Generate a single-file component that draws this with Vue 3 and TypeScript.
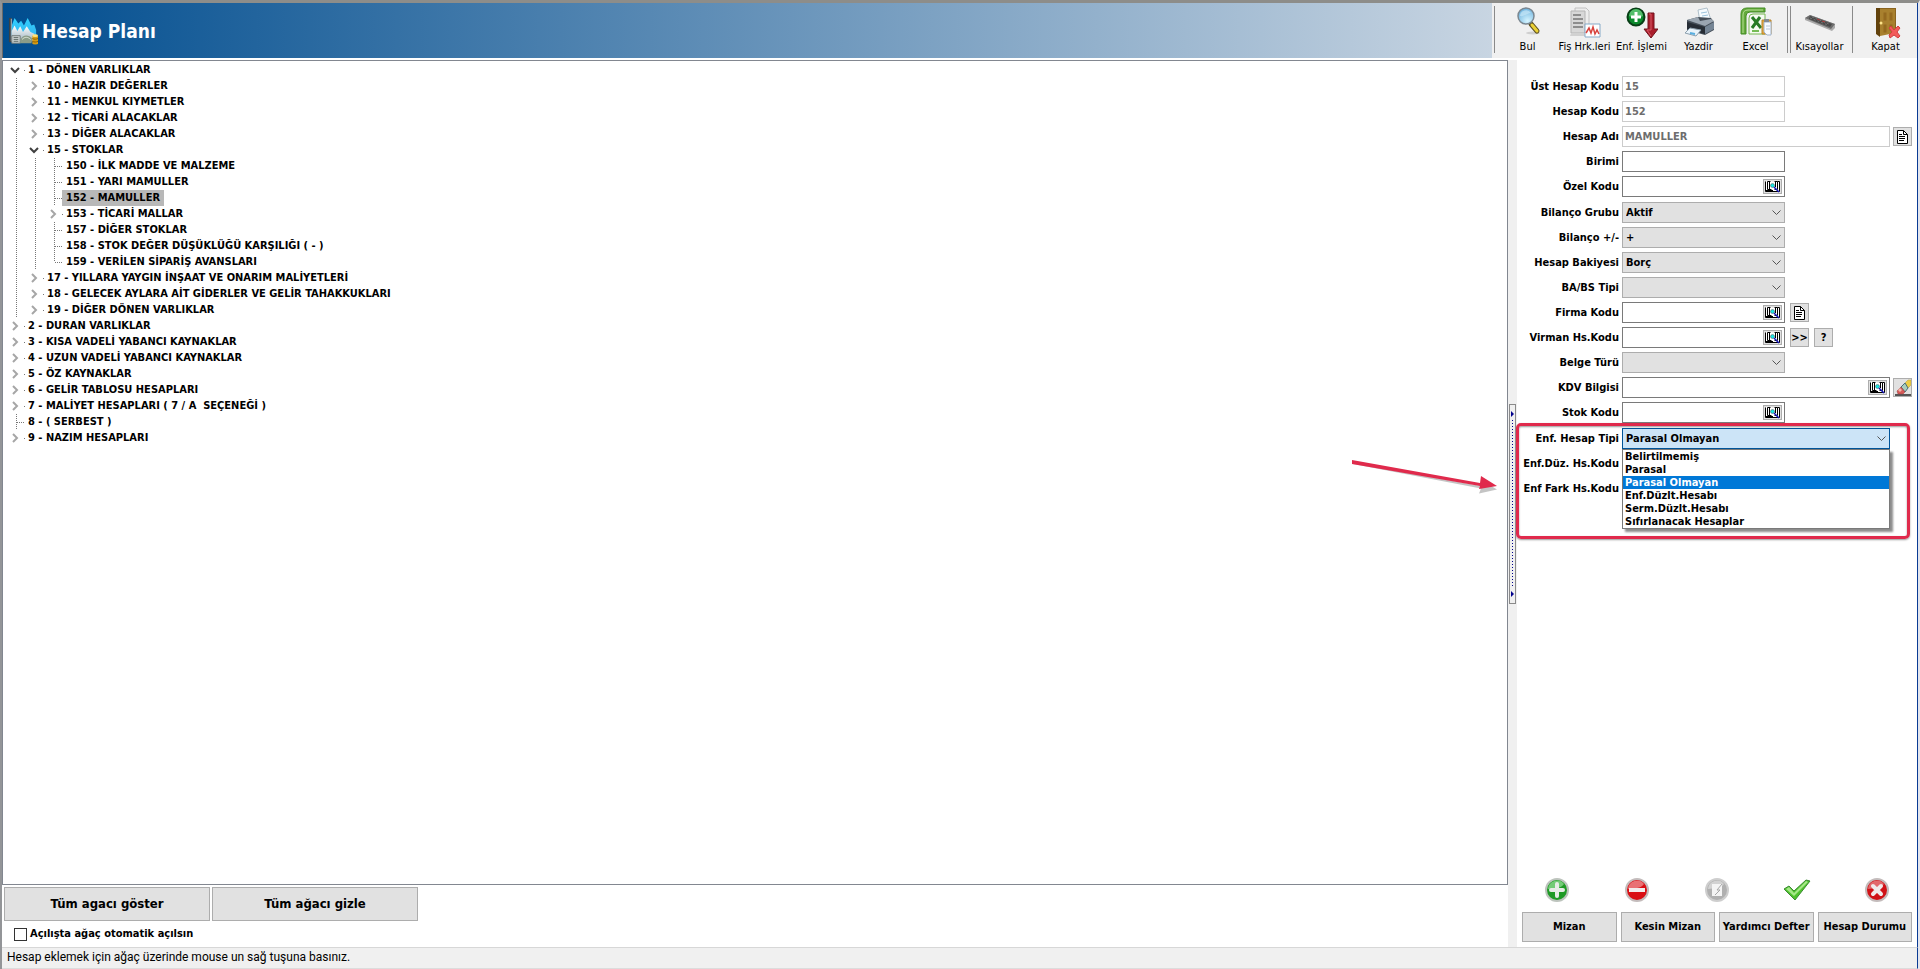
<script setup lang="ts">
import { computed, ref } from 'vue'

interface TreeNode {
  code: string
  name: string
  level: number
  branch: boolean
}

const nodes: TreeNode[] = [
  { code: '1', name: 'DÖNEN VARLIKLAR', level: 0, branch: true },
  { code: '10', name: 'HAZIR DEĞERLER', level: 1, branch: true },
  { code: '11', name: 'MENKUL KIYMETLER', level: 1, branch: true },
  { code: '12', name: 'TİCARİ ALACAKLAR', level: 1, branch: true },
  { code: '13', name: 'DİĞER ALACAKLAR', level: 1, branch: true },
  { code: '15', name: 'STOKLAR', level: 1, branch: true },
  { code: '150', name: 'İLK MADDE VE MALZEME', level: 2, branch: false },
  { code: '151', name: 'YARI MAMULLER', level: 2, branch: false },
  { code: '152', name: 'MAMULLER', level: 2, branch: false },
  { code: '153', name: 'TİCARİ MALLAR', level: 2, branch: true },
  { code: '157', name: 'DİĞER STOKLAR', level: 2, branch: false },
  { code: '158', name: 'STOK DEĞER DÜŞÜKLÜĞÜ KARŞILIĞI ( - )', level: 2, branch: false },
  { code: '159', name: 'VERİLEN SİPARİŞ AVANSLARI', level: 2, branch: false },
  { code: '17', name: 'YILLARA YAYGIN İNŞAAT VE ONARIM MALİYETLERİ', level: 1, branch: true },
  { code: '18', name: 'GELECEK AYLARA AİT GİDERLER VE GELİR TAHAKKUKLARI', level: 1, branch: true },
  { code: '19', name: 'DİĞER DÖNEN VARLIKLAR', level: 1, branch: true },
  { code: '2', name: 'DURAN VARLIKLAR', level: 0, branch: true },
  { code: '3', name: 'KISA VADELİ YABANCI KAYNAKLAR', level: 0, branch: true },
  { code: '4', name: 'UZUN VADELİ YABANCI KAYNAKLAR', level: 0, branch: true },
  { code: '5', name: 'ÖZ KAYNAKLAR', level: 0, branch: true },
  { code: '6', name: 'GELİR TABLOSU HESAPLARI', level: 0, branch: true },
  { code: '7', name: 'MALİYET HESAPLARI ( 7 / A  SEÇENEĞİ )', level: 0, branch: true },
  { code: '8', name: '( SERBEST )', level: 0, branch: false },
  { code: '9', name: 'NAZIM HESAPLARI', level: 0, branch: true },
]

const open = ref<string[]>(['1', '15'])
const selected = ref('152')
const autoOpen = ref(false)

const visible = computed(() =>
  nodes.filter((n) => {
    if (n.level === 0) return true
    if (!open.value.includes(n.code[0])) return false
    return n.level === 1 || open.value.includes(n.code.slice(0, 2))
  }),
)

function toggle(code: string) {
  open.value = open.value.includes(code) ? open.value.filter((c) => c !== code) : [...open.value, code]
}
function isLast(i: number) {
  const next = visible.value[i + 1]
  return !next || next.level < visible.value[i].level
}

type Kind = 'text' | 'lookup' | 'select'
interface Field {
  id: string
  label: string
  kind: Kind
  value?: string
  wide?: boolean
  disabled?: boolean
  extras?: string[]
}

const groups: Field[][] = [
  [
    { id: 'ust', label: 'Üst Hesap Kodu', kind: 'text', value: '15', disabled: true },
    { id: 'kod', label: 'Hesap Kodu', kind: 'text', value: '152', disabled: true },
    { id: 'adi', label: 'Hesap Adı', kind: 'text', value: 'MAMULLER', disabled: true, wide: true, extras: ['doc'] },
    { id: 'birim', label: 'Birimi', kind: 'text' },
    { id: 'ozel', label: 'Özel Kodu', kind: 'lookup' },
  ],
  [
    { id: 'grup', label: 'Bilanço Grubu', kind: 'select', value: 'Aktif' },
    { id: 'isaret', label: 'Bilanço +/-', kind: 'select', value: '+' },
    { id: 'bakiye', label: 'Hesap Bakiyesi', kind: 'select', value: 'Borç' },
    { id: 'babs', label: 'BA/BS Tipi', kind: 'select', value: '' },
    { id: 'firma', label: 'Firma Kodu', kind: 'lookup', extras: ['doc'] },
    { id: 'virman', label: 'Virman Hs.Kodu', kind: 'lookup', extras: ['>>', '?'] },
    { id: 'belge', label: 'Belge Türü', kind: 'select', value: '' },
    { id: 'kdv', label: 'KDV Bilgisi', kind: 'lookup', wide: true, extras: ['eraser'] },
    { id: 'stok', label: 'Stok Kodu', kind: 'lookup' },
  ],
]

const types = ['Belirtilmemiş', 'Parasal', 'Parasal Olmayan', 'Enf.Düzlt.Hesabı', 'Serm.Düzlt.Hesabı', 'Sıfırlanacak Hesaplar']
const type = ref('Parasal Olmayan')
const reports = ['Mizan', 'Kesin Mizan', 'Yardımcı Defter', 'Hesap Durumu']
const extraNames: Record<string, string> = { doc: 'Detay', eraser: 'Temizle', '>>': 'Aktar', '?': 'Yardım' }
</script>

<template>
  <div class="window">
    <header class="top">
      <div class="banner">
        <svg class="logo" width="32" height="30" viewBox="0 0 32 32" aria-hidden="true">
          <defs>
            <linearGradient id="peak" x1="0" y1="0" x2="0" y2="1">
              <stop offset="0" stop-color="#2fd0ff" /><stop offset="1" stop-color="#35b5ee" />
            </linearGradient>
            <linearGradient id="snow" x1="0" y1="0" x2="0" y2="1">
              <stop offset="0" stop-color="#ffffff" /><stop offset="1" stop-color="#9fb4c0" />
            </linearGradient>
          </defs>
          <path d="M1 2h3v26H1z" fill="#3c4348" /><path d="M3 3h1v24H3z" fill="#b9c2c8" />
          <path d="M4 20V10l3-8 4 6 3-3 3 5 4-8 4 8 3-1 2 6v7H4z" fill="url(#peak)" />
          <path d="M4 24v-8l3-6 3 6 3-5 3 6 4-6 4 6 4 2v8H4z" fill="url(#snow)" />
          <path d="M4 21h9v8H4z" fill="#c9d0cf" stroke="#727a78" />
          <path d="M6 23h5M6 25h5M6 27h5" stroke="#5f6b68" />
          <path d="M13 26c3-7 9-6 13-2l-1 5H13z" fill="#8a9c88" /><path d="M15 25c3-3 6-3 9 0" stroke="#dfe8dc" fill="none" />
          <path d="M26 21h6v8a3 1.500 0 0 1-6 0z" fill="#d79c12" /><ellipse cx="29" cy="21" rx="3" ry="1.500" fill="#ffe27a" />
          <path d="M26 24c2 1 4 1 6 0M26 27c2 1 4 1 6 0" stroke="#8c5d00" fill="none" />
        </svg>
        <h1>Hesap Planı</h1>
      </div>
      <nav class="toolbar" aria-label="Araçlar">
        <span class="sep first"></span>
        <button class="tool" type="button">
          <svg width="32" height="32" viewBox="0 0 32 32" aria-hidden="true">
            <defs>
              <radialGradient id="lens" cx="0.6" cy="0.8" r="0.8">
                <stop offset="0" stop-color="#d5f4ff" /><stop offset="1" stop-color="#6db2de" />
              </radialGradient>
            </defs>
            <ellipse cx="21" cy="26" rx="7" ry="1.500" fill="#cfcfcf" />
            <path d="M19 17l6 7" stroke="#5e5222" stroke-width="5" stroke-linecap="round" />
            <path d="M20 18l5 6" stroke="#ead035" stroke-width="3" stroke-linecap="round" />
            <circle cx="14" cy="9" r="8" fill="url(#lens)" stroke="#7b8790" stroke-width="1.500" />
            <path d="M8 9a6 6 0 0 1 11-3c-4 0-7 4-11 3z" fill="#c4e6f7" opacity="0.7" />
          </svg>
          <span>Bul</span>
        </button>
        <button class="tool" type="button">
          <svg width="32" height="32" viewBox="0 0 32 32" aria-hidden="true">
            <path d="M6 1h11l3 3v18H6z" fill="#ededed" stroke="#c2c2c2" />
            <path d="M2 4h14v22H2z" fill="#d8d8d8" stroke="#b4b4b4" />
            <path d="M4 8h8M4 12h10M4 16h10M4 20h10" stroke="#8e8e8e" stroke-width="2" />
            <path d="M2 26h14l3 3H1z" fill="#d1d1d1" />
            <path d="M16 17h15v13H16z" fill="#fff" stroke="#85a9c8" />
            <path d="M17 26l3-5 2 5 2-6 2 7 2-4 2 4" fill="none" stroke="#d8433e" stroke-width="1.500" />
          </svg>
          <span>Fiş Hrk.leri</span>
        </button>
        <button class="tool" type="button">
          <svg width="32" height="32" viewBox="0 0 32 32" aria-hidden="true">
            <path d="M22 6h6v16h4l-7 9-7-9h4z" fill="#a91d2b" stroke="#71121c" /><path d="M23 7h2v16h-4l4 6" fill="none" stroke="#d75a66" />
            <circle cx="10" cy="10" r="8.500" fill="#0b8a2c" stroke="#083e16" stroke-width="2" />
            <path d="M3 9a7 7 0 0 1 14 0c-4 2-9 2-14 0z" fill="#54be6b" />
            <path d="M10 5v10M5 10h10" stroke="#fff" stroke-width="3" />
          </svg>
          <span>Enf. İşlemi</span>
        </button>
        <button class="tool" type="button">
          <svg width="32" height="32" viewBox="0 0 32 32" aria-hidden="true">
            <path d="M15 3l9-2 4 12-11 2z" fill="#f5fbff" stroke="#b1c0ca" /><path d="M18 6l6-1M19 9l6-1" stroke="#9cc4dd" />
            <path d="M4 13l11-3 13 1 3 4v8l-9 5-18-5z" fill="#454e58" />
            <path d="M4 13l11-3 2 4 11-2 3 2-9 5z" fill="#9ba6b1" />
            <path d="M4 15l18 5v7L4 22z" fill="#272d35" /><path d="M22 20l9-5v7l-9 5z" fill="#758595" />
            <path d="M7 21l11 2-5 6-11-3z" fill="#e9f3fa" stroke="#8da0ae" /><path d="M7 26l5 1" stroke="#58aee0" stroke-width="2" />
          </svg>
          <span>Yazdir</span>
        </button>
        <button class="tool" type="button">
          <svg width="32" height="32" viewBox="0 0 32 32" aria-hidden="true">
            <path d="M1 27V7q0-6 6-6h18v4H10q-4 0-4 4v18z" fill="#64aa3b" stroke="#438b24" /><path d="M3 26V8q0-5 5-5h15" stroke="#b5df95" fill="none" />
            <path d="M9 27V11q0-4 4-4h12v20z" fill="#f6fbf2" stroke="#76b650" />
            <path d="M12 10l9 11M20 10l-8 11" stroke="#287b25" stroke-width="3" />
            <path d="M12 24h7" stroke="#75bb54" stroke-width="2" />
            <path d="M22 13h9v14h-9z" fill="#e7a93a" stroke="#b9842c" /><path d="M24 15h7v13h-4l-3-3z" fill="#f8fbff" stroke="#9eb1c9" /><path d="M24 12h5v3h-5z" fill="#858b91" />
            <path d="M26 19h4M26 22h4" stroke="#b9c6d4" />
          </svg>
          <span>Excel</span>
        </button>
        <span class="sep double"></span>
        <button class="tool" type="button">
          <svg width="32" height="32" viewBox="0 0 32 32" aria-hidden="true">
            <path d="M1 13v-2l5-3 25 9v4l-3 3z" fill="#a9a9a9" />
            <path d="M1 11l5-3 25 9-4 5z" fill="#6b6b6b" />
            <path d="M6 9l22 8-2 3-21-8z" fill="#484848" />
            <path d="M8 10l17 7M6 11l18 7" stroke="#777" stroke-dasharray="2 2" />
            <path d="M13 12l3 1M18 14l3 1" stroke="#a83c3c" />
          </svg>
          <span>Kısayollar</span>
        </button>
        <span class="sep"></span>
        <button class="tool" type="button">
          <svg width="32" height="32" viewBox="0 0 32 32" aria-hidden="true">
            <path d="M6 1h20v26H8z" fill="#8a6420" /><path d="M6 1h4v29l-4-3z" fill="#62420c" />
            <path d="M10 2h15v24l-15 3z" fill="#a8802e" /><path d="M13 5h4v9h-4zM19 5h4v9h-4zM13 17h4v9h-4zM19 17h4v7h-4z" fill="#94691f" stroke="#a8802e" />
            <circle cx="11" cy="16" r="1.500" fill="#ffe48a" />
            <path d="M19 21l2-2 3 4 4-4 2 2-3 4 3 4-2 2-4-3-4 3-1-3 3-3z" fill="#f25a5a" stroke="#d04040" />
          </svg>
          <span>Kapat</span>
        </button>
      </nav>
    </header>

    <main class="main">
      <section class="left">
        <div class="tree">
          <ul role="tree" aria-label="Hesap Planı">
            <li v-for="(n, i) in visible" :key="n.code" role="treeitem" :aria-selected="n.code === selected">
              <svg v-for="g in n.level" :key="g" class="guide" width="19" height="16" viewBox="0 0 19 16" aria-hidden="true">
                <path d="M11.500 0v16" />
              </svg>
              <button v-if="n.branch" class="twist" type="button" :aria-label="'Aç/kapat ' + n.code" @click="toggle(n.code)">
                <svg width="19" height="16" viewBox="0 0 19 16" aria-hidden="true">
                  <path v-if="open.includes(n.code)" class="down" d="M6 6l4 4 4-4" />
                  <path v-else class="right" d="M8 4l4 4-4 4" />
                </svg>
              </button>
              <svg v-else class="guide" width="19" height="16" viewBox="0 0 19 16" aria-hidden="true">
                <path :d="isLast(i) ? 'M11.500 0v8' : 'M11.500 0v16'" />
                <path d="M12 8.500h7" />
              </svg>
              <span class="node" :class="{ dot: n.branch, on: n.code === selected }" @click="selected = n.code">{{ n.code }} - {{ n.name }}</span>
            </li>
          </ul>
          <svg class="arrow" width="150" height="40" viewBox="0 0 150 40" aria-hidden="true">
            <path class="shade" d="M4 8l128 24.500-2 5 18-4-15-9-1 5.500L4 7z" />
            <path d="M3 4l128 23 1-7 16 10-18 3 1-3L3 8z" />
          </svg>
        </div>
        <div class="actions">
          <button class="btn" type="button" @click="open = ['1', '15']">Tüm agacı göster</button>
          <button class="btn" type="button" @click="open = []">Tüm ağacı gizle</button>
        </div>
        <label class="auto"><input v-model="autoOpen" type="checkbox" />Açılışta ağaç otomatik açılsın</label>
      </section>

      <div class="splitter">
        <div class="grip">
          <svg width="3" height="6" viewBox="0 0 3 6" aria-hidden="true"><path d="M0 0l3 3-3 3z" /></svg>
          <span class="dots"></span>
          <svg width="3" height="6" viewBox="0 0 3 6" aria-hidden="true"><path d="M0 0l3 3-3 3z" /></svg>
        </div>
      </div>

      <form class="panel" @submit.prevent>
        <div v-for="(group, gi) in groups" :key="gi" class="group">
          <div v-for="f in group" :key="f.id" class="row">
            <label :for="f.id">{{ f.label }}</label>
            <div class="field" :class="{ wide: f.wide }">
              <template v-if="f.kind === 'select'">
                <select :id="f.id"><option>{{ f.value }}</option></select>
                <svg class="caret" width="9" height="6" viewBox="0 0 9 6" aria-hidden="true"><path d="M0.500 0.500l4 4 4-4" /></svg>
              </template>
              <input v-else :id="f.id" type="text" :value="f.value" :disabled="f.disabled" />
              <button v-if="f.kind === 'lookup'" class="lookup" type="button" :aria-label="f.label + ' ara'">
                <svg width="17" height="13" viewBox="0 0 17 13" aria-hidden="true">
                  <path d="M2 1h5l2 1 2-1h4v10H2z" fill="#fff" />
                  <path d="M1.500 1.500v10h14v-10h-2v8h-3M3.500 1.500v8h4M3.500 1.500h3M10.500 1.500h3" fill="none" stroke="#000" />
                  <path d="M5 2h1v7H5zM11 2h1v5h-1zM2 10h7v2H2zM12 11h3v1h-3z" fill="#000" />
                  <circle cx="8.500" cy="5.500" r="2" fill="#19e5e5" stroke="#555" stroke-width="0.500" />
                  <path d="M10 7l5 5" stroke="#1414b8" stroke-width="1.500" />
                </svg>
              </button>
            </div>
            <button v-for="x in f.extras" :key="x" class="extra" :class="{ far: f.wide }" type="button" :aria-label="extraNames[x]">
              <svg v-if="x === 'doc'" width="11" height="14" viewBox="0 0 11 14" aria-hidden="true">
                <path d="M0.500 0.500h6l4 4v9h-10z" fill="#fff" stroke="#000" /><path d="M6.500 0.500v4h4" fill="none" stroke="#000" />
                <path d="M2 4.500h3M2 6.500h6M2 8.500h6M2 10.500h5" stroke="#000" />
              </svg>
              <svg v-else-if="x === 'eraser'" width="17" height="17" viewBox="0 0 17 17" aria-hidden="true">
                <path d="M1 16h16" stroke="#555" stroke-width="2" />
                <path d="M11 4l3-3h3v5l-3 3z" fill="#edcd45" stroke="#b09a3a" stroke-width="0.500" /><path d="M7 8l4-4 3 5-3 4z" fill="#a9cdbc" stroke="#496e78" />
                <path d="M3 12l4-4 4 5-2 2H4z" fill="#d75a58" stroke="#943c3c" stroke-width="0.500" /><path d="M4 11l2-2 2 2-2 2z" fill="#f1b7ab" />
              </svg>
              <template v-else>{{ x }}</template>
            </button>
          </div>
        </div>

        <div class="group inflation">
          <div class="row">
            <label for="enf">Enf. Hesap Tipi</label>
            <div class="field wide">
              <select id="enf" v-model="type" class="active">
                <option v-for="t in types" :key="t">{{ t }}</option>
              </select>
              <svg class="caret" width="9" height="6" viewBox="0 0 9 6" aria-hidden="true"><path d="M0.500 0.500l4 4 4-4" /></svg>
              <ul class="list" role="listbox" aria-label="Enf. Hesap Tipi">
                <li v-for="t in types" :key="t" role="option" :aria-selected="t === type" :class="{ on: t === type }" @click="type = t">{{ t }}</li>
              </ul>
            </div>
          </div>
          <div class="row"><span class="name">Enf.Düz. Hs.Kodu</span></div>
          <div class="row"><span class="name">Enf Fark Hs.Kodu</span></div>
        </div>

        <div class="commands">
          <button type="button" aria-label="Ekle">
            <svg width="24" height="24" viewBox="0 0 24 24" aria-hidden="true">
              <circle cx="12" cy="12" r="11" fill="#1f9a26" stroke="#bdc4bd" stroke-width="2" /><path d="M3 11a9 9 0 0 1 16-5c-3 5-10 4-16 5z" fill="#73cb76" />
              <path d="M12 6v12M6 12h12" stroke="#e6ece6" stroke-width="4" stroke-linecap="round" />
            </svg>
          </button>
          <button type="button" aria-label="Sil">
            <svg width="24" height="24" viewBox="0 0 24 24" aria-hidden="true">
              <circle cx="12" cy="12" r="11" fill="#d90f14" stroke="#c4bcbc" stroke-width="2" /><path d="M3 11a9 9 0 0 1 16-5c-3 5-10 4-16 5z" fill="#e97174" />
              <path d="M4 10h16v4H4z" fill="#f3eded" />
            </svg>
          </button>
          <button type="button" aria-label="Düzenle" disabled>
            <svg width="24" height="24" viewBox="0 0 24 24" aria-hidden="true">
              <circle cx="12" cy="12" r="11" fill="#b0b0b0" stroke="#cecece" stroke-width="2" /><path d="M3 11a9 9 0 0 1 16-5c-3 5-10 4-16 5z" fill="#d2d2d2" />
              <path d="M7 6h10v12H7z" fill="#f4f4f4" /><path d="M17 6l-5 6h3l-5 5" stroke="#a8a8a8" fill="none" />
            </svg>
          </button>
          <button type="button" aria-label="Onayla">
            <svg width="28" height="24" viewBox="0 0 28 24" aria-hidden="true">
              <path d="M1 11l5-3 5 5L23 2l4 1-15 19z" fill="#4fc22d" stroke="#3c8a34" /><path d="M3 11l3-2 5 6L23 3l2 1-14 14z" fill="#a5e888" />
            </svg>
          </button>
          <button type="button" aria-label="İptal">
            <svg width="24" height="24" viewBox="0 0 24 24" aria-hidden="true">
              <circle cx="12" cy="12" r="11" fill="#d01217" stroke="#c4bcbc" stroke-width="2" /><path d="M3 11a9 9 0 0 1 16-5c-3 5-10 4-16 5z" fill="#e2686b" />
              <path d="M8 8l8 8M16 8l-8 8" stroke="#f0eaea" stroke-width="4" stroke-linecap="round" />
            </svg>
          </button>
        </div>
        <div class="reports">
          <button v-for="r in reports" :key="r" class="btn small" type="button">{{ r }}</button>
        </div>
      </form>
    </main>

    <footer class="status">Hesap eklemek için ağaç üzerinde mouse un sağ tuşuna basınız.</footer>
  </div>
</template>

<style>
body {
  margin: 0;
}
</style>

<style scoped>
* {
  box-sizing: border-box;
}
.window {
  display: flex;
  flex-direction: column;
  min-height: 100vh;
  border-top: 3px solid #8d8d8a;
  border-left: 2px solid #939598;
  border-right: 2px solid #e4e6ee;
  background: #fff;
  color: #000;
  font: bold 11px/16px 'DejaVu Sans Condensed', 'DejaVu Sans', sans-serif;
}
button,
input,
select {
  margin: 0;
  font: inherit;
  color: inherit;
}
ul {
  margin: 0;
  padding: 0;
  list-style: none;
}
.top {
  display: flex;
  height: 55px;
  border-left: 1px solid #696969;
  border-right: 1px solid #0b3c94;
}
.banner {
  flex: 1;
  display: flex;
  align-items: center;
  gap: 3px;
  padding: 0 0 0 4px;
  background: linear-gradient(90deg, #004d8f, #c8d5e2);
}
h1 {
  margin: 0;
  font-size: 19px;
  line-height: 24px;
  color: #fff;
}
.toolbar {
  display: flex;
  align-items: flex-start;
  padding: 3px 3px 0 2px;
  background: #f0f0f0;
}
.tool {
  display: flex;
  flex-direction: column;
  align-items: center;
  width: 57px;
  padding: 1px 0 0;
  border: 0;
  background: none;
  font-weight: normal;
  line-height: 16px;
  white-space: nowrap;
}
.sep {
  width: 1px;
  height: 47px;
  margin: 0 4px;
  background: #8a8a8a;
}
.sep.first {
  margin-left: 0;
}
.sep.double {
  width: 4px;
  margin: 0 0 0 3px;
  border: solid #8a8a8a;
  border-width: 0 1px;
  background: none;
}
.main {
  flex: 1;
  display: flex;
  padding-top: 2px;
  border-right: 1px solid #0b3c94;
}
.left {
  flex: 1;
  display: flex;
  flex-direction: column;
}
.tree {
  position: relative;
  flex: 1;
  padding: 1px 0 0 2px;
  border: 1px solid #828790;
}
.tree li {
  display: flex;
  height: 16px;
  white-space: pre;
}
.guide path {
  fill: none;
  stroke: #777;
  stroke-dasharray: 1 1;
}
.twist {
  width: 19px;
  height: 16px;
  padding: 0;
  border: 0;
  background: none;
}
.twist svg {
  display: block;
}
.twist path {
  fill: none;
  stroke: #a6a6a6;
  stroke-width: 2;
}
.twist .down {
  stroke: #404040;
}
.node {
  padding: 0 4px;
}
.node.on {
  background: #b8b8b8;
}
.dot {
  background: linear-gradient(#777, #777) 0 8px / 1px 1px no-repeat;
}
.arrow {
  position: absolute;
  top: 395px;
  right: 8px;
  fill: #e02a4c;
}
.arrow .shade {
  fill: #8a8a8a;
  opacity: 0.5;
}
.btn {
  padding: 0;
  border: 1px solid #adadad;
  background: #e1e1e1;
  white-space: nowrap;
}
.actions {
  display: flex;
  gap: 2px;
  padding: 2px 0 0 2px;
}
.actions .btn {
  width: 206px;
  height: 34px;
  font-size: 13px;
}
.auto {
  display: flex;
  align-items: center;
  align-self: flex-start;
  gap: 3px;
  height: 26px;
  padding-left: 12px;
}
input[type='checkbox'] {
  appearance: none;
  width: 13px;
  height: 13px;
  border: 1px solid #333;
  background: #fff;
}
input[type='checkbox']:checked {
  background: #0078d7;
}
.splitter {
  display: flex;
  align-items: center;
  width: 9px;
  padding-left: 1px;
  background: #f0f0f0;
}
.grip {
  display: flex;
  flex-direction: column;
  align-items: center;
  justify-content: space-between;
  width: 7px;
  height: 200px;
  padding: 6px 0;
  border: 1px solid #8a8a8a;
  fill: #00008b;
}
.dots {
  width: 1px;
  height: 168px;
  background: repeating-linear-gradient(#00008b 0 1px, transparent 1px 3px);
}
.panel {
  display: flex;
  flex-direction: column;
  gap: 5px;
  width: 400px;
  padding: 16px 5px 5px;
}
.group {
  position: relative;
  display: flex;
  flex-direction: column;
  gap: 4px;
}
.row {
  display: flex;
  align-items: center;
  height: 21px;
}
.row > label,
.name {
  width: 97px;
  margin-right: 3px;
  text-align: right;
  white-space: nowrap;
}
.field {
  position: relative;
  width: 163px;
  height: 21px;
}
.field.wide {
  width: 268px;
}
.field input,
.field select {
  display: block;
  width: 100%;
  height: 21px;
  padding: 0 2px;
  border: 1px solid #7a7a7a;
  border-radius: 0;
  background: #fff;
}
.field input:disabled {
  border-color: #ccc;
  color: #6d6d6d;
}
.field select {
  appearance: none;
  padding: 0 3px;
  border-color: #adadad;
  background: #e1e1e1;
}
.field select.active {
  border-color: #005499;
  background: #cce4f7;
}
.caret {
  position: absolute;
  top: 8px;
  right: 4px;
  fill: none;
  stroke: #555;
  pointer-events: none;
}
.lookup {
  position: absolute;
  top: 3px;
  right: 3px;
  display: flex;
  width: 19px;
  height: 15px;
  padding: 0;
  border: 1px solid #adadad;
  background: #e1e1e1;
}
.extra {
  display: flex;
  align-items: center;
  justify-content: center;
  width: 19px;
  height: 19px;
  margin-left: 5px;
  padding: 0;
  border: 1px solid #adadad;
  background: #e1e1e1;
}
.extra.far {
  margin-left: 3px;
}
.inflation::before {
  content: '';
  position: absolute;
  top: -5px;
  left: -6px;
  right: 2px;
  height: 110px;
  border: 3px solid #e02a4c;
  border-radius: 5px;
  box-shadow: 0 1px 2px #999, inset 0 1px 2px #999;
  pointer-events: none;
}
.list {
  position: absolute;
  z-index: 1;
  top: 21px;
  left: 0;
  width: 100%;
  border: 1px solid #7a7a7a;
  background: #fff;
  box-shadow: 3px 3px 2px rgba(0, 0, 0, 0.45);
}
.list li {
  padding: 0 2px;
  line-height: 13px;
}
.list .on {
  background: #0078d7;
  color: #fff;
}
.commands {
  display: flex;
  justify-content: space-around;
  margin: auto -5px 0;
  padding-bottom: 5px;
}
.commands button {
  display: flex;
  justify-content: center;
  width: 30px;
  padding: 0;
  border: 0;
  background: none;
}
.reports {
  display: flex;
  gap: 4px;
}
.btn.small {
  flex: 1;
  height: 30px;
}
.status {
  height: 22px;
  padding: 0 5px;
  border-top: 1px solid #d7d7d7;
  border-right: 1px solid #0b3c94;
  border-bottom: 1px solid #dcdcdc;
  background: #f0f0f0;
  font-family: Roboto, 'Noto Sans', sans-serif;
  font-size: 12px;
  font-weight: normal;
  line-height: 19px;
}
</style>
